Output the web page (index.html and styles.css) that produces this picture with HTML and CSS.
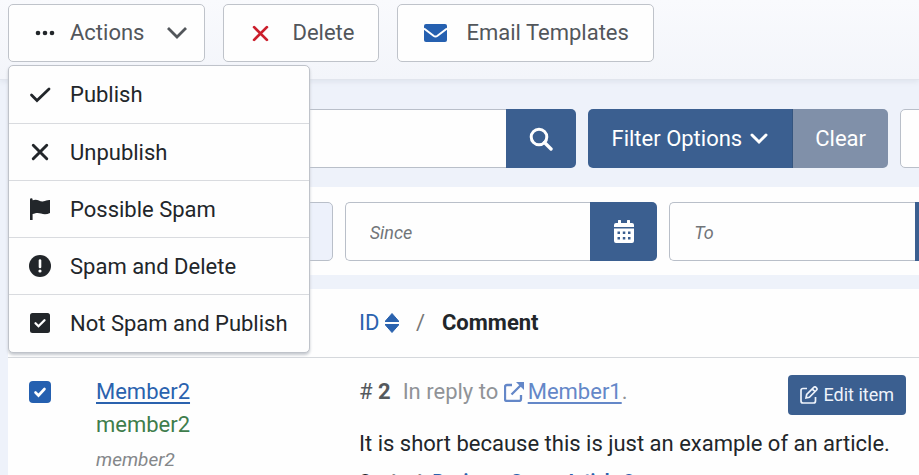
FILE: index.html
```html
<!DOCTYPE html>
<html lang="en">
<head>
<meta charset="utf-8">
<title>Comments</title>
<link rel="stylesheet" href="styles.css">
</head>
<body>
<svg class="sprite" aria-hidden="true">
  <symbol id="x" viewBox="0 0 16 16"><path d="M2 2l12 12M14 2L2 14" fill="none" stroke="currentColor" stroke-width="2.600" stroke-linecap="round"/></symbol>
  <symbol id="calendar" viewBox="0 0 20 23"><path d="M4 1a1 1 0 0 1 3 0v2h6V1a1 1 0 0 1 3 0v2h2a2 2 0 0 1 2 2v2H0V5a2 2 0 0 1 2-2h2z" fill="currentColor"/><path fill-rule="evenodd" d="M0 8.500h20V21a2 2 0 0 1-2 2H2a2 2 0 0 1-2-2zM3.500 11.500v2.500h2.500v-2.500zm5.300 0v2.500h2.500v-2.500zM14 11.500v2.500h2.500v-2.500zM3.500 17v2.500h2.500v-2.500zm5.300 0v2.500h2.500v-2.500zM14 17v2.500h2.500v-2.500z" fill="currentColor"/></symbol>
</svg>
<header class="toolbar">
  <div class="actions">
    <button class="tool tool-actions" type="button" aria-expanded="true">
      <svg class="dots" viewBox="0 0 20 6"><g fill="currentColor"><circle cx="3" cy="3" r="2.300"/><circle cx="10" cy="3" r="2.300"/><circle cx="17" cy="3" r="2.300"/></g></svg>
      Actions
      <svg class="caret" viewBox="0 0 22 14"><path d="M2 2l9 9 9-9" fill="none" stroke="currentColor" stroke-width="2.800"/></svg>
    </button>
    <div class="menu">
      <button type="button"><svg viewBox="0 0 22 22"><path d="M2.500 11l5.500 5.500L20 5" fill="none" stroke="currentColor" stroke-width="2.800" stroke-linecap="round"/></svg>Publish</button>
      <button type="button"><svg class="small-x"><use href="#x"/></svg>Unpublish</button>
      <button type="button"><svg viewBox="0 0 22 22"><path d="M1 1.500a1.300 1.300 0 0 1 2.600 0v.8c5-2 7 2 11 1 2-.3 3.500-1.500 6.400-1.300V15c-3 1.500-6 1.800-9 .5-3-1-5-.7-8.400.5v6H1z" fill="currentColor"/></svg>Possible Spam</button>
      <button type="button"><svg viewBox="0 0 22 22"><circle cx="11" cy="11" r="11" fill="currentColor"/><path d="M11 5.500v6.500" stroke="#fff" stroke-width="2.600" stroke-linecap="round"/><circle cx="11" cy="16" r="1.600" fill="#fff"/></svg>Spam and Delete</button>
      <button type="button"><svg viewBox="0 0 22 22"><rect x="1" y="1" width="20" height="20" rx="2.500" fill="currentColor"/><path d="M6.500 11.200l3 3 6-6" fill="none" stroke="#fff" stroke-width="2.300" stroke-linecap="round"/></svg>Not Spam and Publish</button>
    </div>
  </div>
  <button class="tool tool-delete" type="button"><svg class="x-icon"><use href="#x"/></svg>Delete</button>
  <button class="tool tool-mail" type="button"><svg class="mail" viewBox="0 0 23 18"><rect width="23" height="18" rx="2" fill="currentColor"/><path d="M0 4.500l9.500 7.200q2 1.400 4 0L23 4.500" fill="none" stroke="#fff" stroke-width="2"/></svg>Email Templates</button>
</header>
<main>
  <form class="search-bar">
    <div class="group search"><input type="text" aria-label="Search"><button type="button" aria-label="Search"><svg class="glass" viewBox="0 0 24 24"><circle cx="10" cy="10" r="7.800" fill="none" stroke="currentColor" stroke-width="3"/><path d="M15.500 15.500l6.500 6.500" stroke="currentColor" stroke-width="3.400" stroke-linecap="round"/></svg></button></div>
    <div class="group options"><button type="button">Filter Options <svg class="chevron" viewBox="0 0 18 12"><path d="M2 2l7 7 7-7" fill="none" stroke="currentColor" stroke-width="3" stroke-linecap="round"/></svg></button><button class="clear" type="button">Clear</button></div>
    <select class="order" aria-label="Order"><option></option></select>
  </form>
  <section class="filters">
    <select class="state" aria-label="State"><option></option></select>
    <div class="group date"><input type="text" placeholder="Since" aria-label="Since"><button type="button" aria-label="Pick start date"><svg class="cal"><use href="#calendar"/></svg></button></div>
    <div class="group date"><input type="text" placeholder="To" aria-label="To"><button type="button" aria-label="Pick end date"></button></div>
  </section>
  <table>
    <thead>
      <tr><th class="col-check"></th><th class="col-user"></th><th><a class="sort" href="#">ID <svg viewBox="0 0 14 20"><path d="M7 .5L14 8.500H0zM7 19.500l7-8H0z" fill="currentColor" stroke="currentColor" stroke-linejoin="round"/></svg></a><span class="slash">/</span>Comment</th></tr>
    </thead>
    <tbody>
      <tr>
        <td class="col-check"><input type="checkbox" checked aria-label="Select comment 2"></td>
        <td class="col-user"><a href="#">Member2</a><div class="login">member2</div><div class="alias">member2</div></td>
        <td class="col-comment">
          <div class="meta"><p><span class="hash"># <b>2</b></span><span class="reply">In reply to <a href="#"><svg class="ext" viewBox="0 0 20 20"><path d="M8 3H3q-2 0-2 2v12q0 2 2 2h12q2 0 2-2v-4M7.500 12.500L18 2" fill="none" stroke="currentColor" stroke-width="2.300"/><path d="M12 0h8v8z" fill="currentColor"/></svg><span>Member1</span></a>.</span></p>
          <button class="edit" type="button"><svg viewBox="0 0 18 18"><path d="M7 2.500H3q-2 0-2 2V15q0 2 2 2h10.500q2 0 2-2v-4M6 12l.7-3.500L14 1.200q1-.8 2 .2l.6.6q.9 1 0 2L9.400 11.300zM12.300 3l2.700 2.700" fill="none" stroke="currentColor" stroke-width="1.700"/></svg>Edit item</button></div>
          <p class="body">It is short because this is just an example of an article.</p>
          <p class="source"><b>Content:</b> <a href="#">Business Space Article 2</a></p>
        </td>
      </tr>
    </tbody>
  </table>
</main>
</body>
</html>
```
FILE: styles.css
```css
* { box-sizing: border-box; }
body { margin: 0; height: 100vh; background: #eef2fa; color: #22262a; font: 22px/33px Roboto, sans-serif; overflow: hidden; }
button, input, select { font: inherit; color: inherit; margin: 0; }
button { display: flex; align-items: center; border: 0; white-space: nowrap; }
svg { flex: none; }
p { margin: 0; }
a { color: #2a62ae; }
.sprite { display: none; }

.toolbar { display: flex; gap: 18px; padding: 4px 8px 17px; background: linear-gradient(#f9fafd, #f3f5fa); border-bottom: 1px solid #e1e5ed; box-shadow: 0 2px 5px #dfe4ed; }
.actions { position: relative; }
.tool { height: 58px; background: #fefefe; border: 1px solid #bfc3ca; border-radius: 5px; color: #52565b; line-height: 32px; }
.tool-actions { padding: 0 16px 0 26px; gap: 15px; }
.tool-delete { padding: 0 24px 0 28px; gap: 23px; }
.tool-mail { padding: 0 24px 0 26px; gap: 19px; }
.dots { width: 20px; height: 6px; color: #22262a; }
.caret { width: 22px; height: 14px; margin-left: 7px; }
.x-icon { width: 17px; height: 17px; color: #cb1f2c; }
.mail { width: 23px; height: 18px; color: #2560b0; }

.menu { position: absolute; z-index: 2; top: 61px; left: 0; width: 302px; padding-bottom: 1px; background: #fefefe; border: 1px solid #bfc3ca; border-radius: 5px; box-shadow: 0 2px 3px #c5c9cf; }
.menu button { width: 100%; height: 57px; padding: 0 0 0 20px; gap: 19px; background: none; }
.menu button + button { border-top: 1px solid #d9dbdf; }
.menu svg { width: 22px; height: 22px; }
.menu .small-x { width: 18px; height: 18px; margin: 0 2px; }

main { padding: 29px 0 0 8px; overflow: hidden; }
.search-bar { display: flex; gap: 12px; margin-right: -60px; }
.group { display: flex; height: 59px; }
.group input { flex: 1; min-width: 0; padding: 0 24px; background: #fefefe; border: 1px solid #b9bfc9; border-right: 0; border-radius: 5px 0 0 5px; }
.group button { justify-content: center; color: #fff; background: #3b5f90; border-radius: 0 5px 5px 0; line-height: 32px; }
.search { flex: 1; }
.search button { width: 70px; }
.glass { width: 24px; height: 24px; }
.group.options button { padding: 0 24px; border-radius: 5px 0 0 5px; gap: 8px; }
.chevron { width: 18px; height: 12px; }
.group.options .clear { padding: 0 22px; background: #8090a9; border-left: 1px solid #35557f; border-radius: 0 5px 5px 0; }
.order { width: 79px; background: #fefefe; border: 1px solid #b9bfc9; border-radius: 5px; }

.filters { display: flex; gap: 12px; margin: 19px -63px 0 0; padding: 15px 0 14px; background: #fefefe; }
.state { flex: 1 1 325px; min-width: 0; appearance: none; background: #edf1fb; border: 1px solid #b9bfc9; border-radius: 5px; }
.date { flex: 1 1 313px; min-width: 0; }
.date button { width: 67px; }
.date input::placeholder { color: #717579; font-size: 18px; font-style: italic; opacity: 1; }
.cal { width: 20px; height: 23px; }

table { width: 100%; margin-top: 14px; border-collapse: collapse; background: #fefefe; table-layout: fixed; }
th, td { padding: 0; text-align: left; vertical-align: top; }
th { height: 68px; vertical-align: middle; font-weight: 700; border-bottom: 1px solid #d5d8dc; }
.col-check { width: 88px; }
.col-user { width: 263px; }
.sort { font-weight: 400; text-decoration: none; }
.sort svg { width: 14px; height: 20px; vertical-align: -3px; }
.slash { margin: 0 17px; font-weight: 400; color: #777; }
td { padding-top: 17px; }
td input { appearance: none; display: block; width: 22px; height: 22px; margin: 6px 0 0 21px; border-radius: 4px; background: #2560b0 url("data:image/svg+xml,%3Csvg xmlns='http://www.w3.org/2000/svg' viewBox='0 0 22 22'%3E%3Cpath d='M6.500 11.500l3 3 6-6.500' fill='none' stroke='white' stroke-width='2.600' stroke-linecap='round'/%3E%3C/svg%3E"); }
td a { text-underline-offset: 3px; }
.login { color: #3f7d4c; }
.alias { font-size: 19px; font-style: italic; color: #84878a; padding-top: 2px; }
.meta { display: flex; justify-content: space-between; padding-right: 13px; }
.hash { margin-right: 12px; color: #55595d; }
.reply { color: #909397; }
.reply a { color: #6487c8; text-decoration: none; }
.reply a span { text-decoration: underline; }
.ext { width: 20px; height: 20px; margin-right: 4px; vertical-align: -3px; }
.edit { height: 40px; padding: 0 12px; gap: 5px; color: #eef3fb; background: #3b5f90; border-radius: 4px; font-size: 18px; }
.edit svg { width: 18px; height: 18px; }
.body { padding-top: 12px; }
.source { padding-top: 4px; font-size: 18px; }
.source a { font-weight: 700; text-decoration: none; }
```
